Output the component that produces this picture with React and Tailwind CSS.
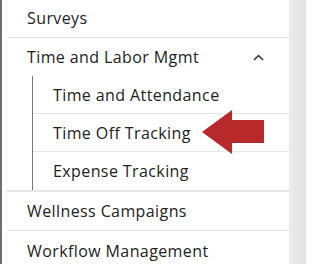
import React from "react";

const Row = ({ children, className = "" }) => (
  <div className={`h-[39px] flex items-center border-b border-[#e6e6e6] ${className}`}>
    {children}
  </div>
);

const SubItem = ({ label, last }) => (
  <div
    className={`h-[38px] flex items-center pl-5 ${last ? "" : "border-b border-[#e6e6e6]"}`}
  >
    {label}
  </div>
);

export default function App() {
  return (
    <div
      className="relative flex w-[306px] h-[264px] overflow-hidden bg-white text-[#222] text-[16px] tracking-[0.4px]"
      style={{ fontFamily: '"Open Sans", "Liberation Sans", sans-serif' }}
    >
      <div className="w-[2px] bg-[#6f6f6f] shrink-0" />
      <div className="w-[287px] shrink-0 pl-[5px] -mt-px">
        <Row className="pl-5">Surveys</Row>
        <div className="h-[38px] flex items-center justify-between pl-5 pr-[25px]">
          <span>Time and Labor Mgmt</span>
          <svg width="11" height="7" viewBox="0 0 11 7" fill="none">
            <path d="M1 6 L5.5 1.5 L10 6" stroke="#333" strokeWidth="1.5" />
          </svg>
        </div>
        <div className="ml-[25px] border-l border-[#777]">
          <SubItem label="Time and Attendance" />
          <SubItem label="Time Off Tracking" />
          <SubItem label="Expense Tracking" last />
        </div>
        <div className="border-t-2 border-[#e6e6e6]" />
        <Row className="pl-5">Wellness Campaigns</Row>
        <Row className="pl-5 border-b-0">Workflow Management</Row>
      </div>
      <div className="flex-1 bg-gradient-to-r from-[#ececec] to-[#e2e2e2]" />
      <svg
        className="absolute left-0 top-0 pointer-events-none"
        width="306"
        height="264"
      >
        <polygon
          points="202,132 232,110 232,120 264,120 264,143 232,143 232,154"
          fill="#b8292b"
        />
      </svg>
    </div>
  );
}
